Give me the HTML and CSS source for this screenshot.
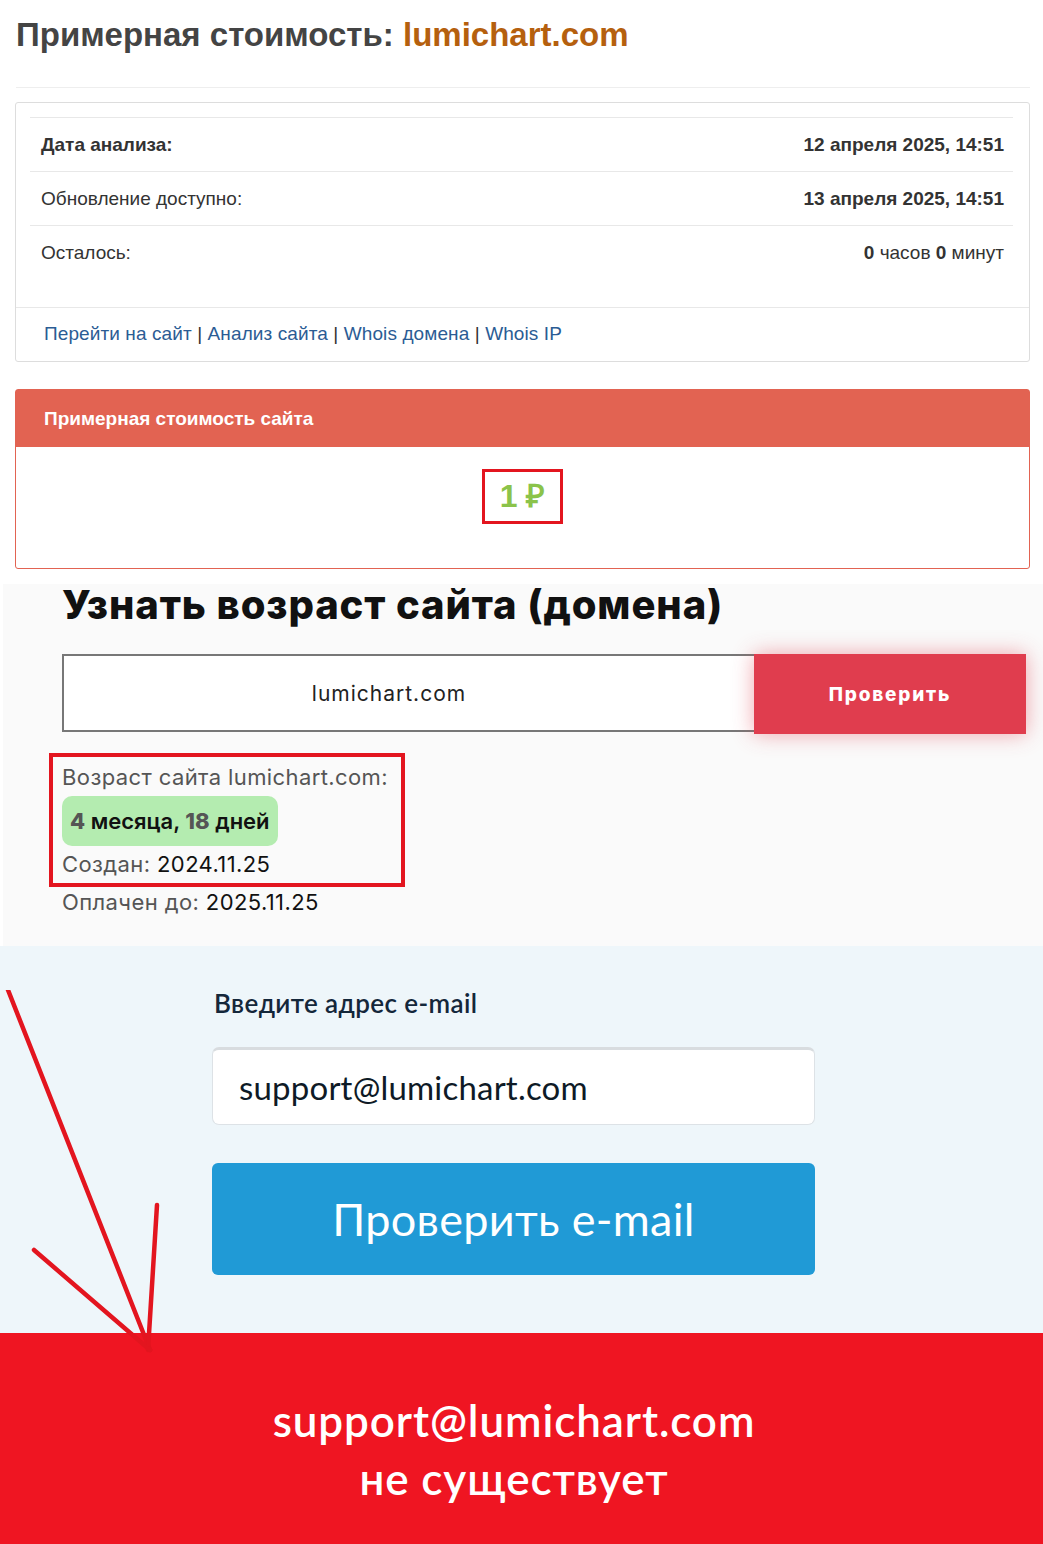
FILE: index.html
```html
<!DOCTYPE html>
<html lang="ru">
<head>
    <meta charset="UTF-8">
    <meta name="viewport" content="width=device-width, initial-scale=1.0">
    <title>lumichart.com — проверка</title>
    <link rel="stylesheet" href="styles.css">
</head>
<body>
    <div class="page">

        <!-- стоимость сайта -->
        <div class="cost">
            <h1 class="cost-title">Примерная стоимость: <span class="domain">lumichart.com</span></h1>

            <div class="info-card">
                <table class="info-table">
                    <tr>
                        <td><b>Дата анализа:</b></td>
                        <td class="right"><b>12 апреля 2025, 14:51</b></td>
                    </tr>
                    <tr>
                        <td>Обновление доступно:</td>
                        <td class="right"><b>13 апреля 2025, 14:51</b></td>
                    </tr>
                    <tr>
                        <td>Осталось:</td>
                        <td class="right"><b>0</b> часов <b>0</b> минут</td>
                    </tr>
                </table>
                <div class="info-links">
                    <a href="#">Перейти на сайт</a> | <a href="#">Анализ сайта</a> | <a href="#">Whois домена</a> | <a href="#">Whois IP</a>
                </div>
            </div>

            <div class="price-card">
                <div class="price-head">Примерная стоимость сайта</div>
                <div class="price-body">
                    <span class="price mark">1 ₽</span>
                </div>
            </div>
        </div>

        <!-- возраст домена -->
        <div class="age">
            <h2 class="age-title">Узнать возраст сайта (домена)</h2>
            <form class="age-form">
                <input class="age-input" type="text" value="lumichart.com">
                <button class="age-btn" type="button">Проверить</button>
            </form>
            <div class="age-result">
                <div class="mark mark-thick">
                    <div class="age-line">Возраст сайта lumichart.com:</div>
                    <div class="age-badge"><b>4</b> месяца, <b>18</b> дней</div>
                    <div class="age-line">Создан: <span class="val">2024.11.25</span></div>
                </div>
                <div class="age-line age-paid">Оплачен до: <span class="val">2025.11.25</span></div>
            </div>
        </div>

        <!-- проверка e-mail -->
        <div class="mail">
            <div class="mail-box">
                <label class="mail-label">Введите адрес e-mail</label>
                <input class="mail-input" type="text" value="support@lumichart.com">
                <button class="mail-btn" type="button">Проверить e-mail</button>
            </div>
        </div>

        <div class="result">
            <p>support@lumichart.com</p>
            <p>не существует</p>
        </div>

        <svg class="arrow" width="170" height="380" viewBox="0 0 170 380">
            <line x1="8" y1="0" x2="150" y2="360" />
            <line x1="157" y1="215" x2="148" y2="360" />
            <line x1="34" y1="260" x2="150" y2="360" />
        </svg>
    </div>
</body>
</html>
```

FILE: styles.css
```css
body {
    margin: 0;
    background-color: #fff;
    font-family: 'Liberation Sans', Arial, sans-serif;
    color: #333;
}
.page {
    position: relative;
    width: 1043px;
    overflow: hidden;
}

/* стоимость */
.cost {
    padding: 16px 13px 15px 15px;
}
.cost-title {
    margin: 0 0 0 1px;
    font-size: 33px;
    line-height: 38px;
    font-weight: bold;
    color: #444;
    padding-bottom: 33px;
    border-bottom: 1px solid #eee;
}
.domain {
    color: #b5600e;
}
.info-card {
    margin-top: 14px;
    border: 1px solid #ddd;
    border-radius: 3px;
}
.info-table {
    width: calc(100% - 30px);
    margin: 14px 14px 0 14px;
    border-collapse: collapse;
    font-size: 19px;
}
.info-table td {
    border-top: 1px solid #e8e8e8;
    height: 53px;
    padding: 0 9px 0 11px;
}
.info-table .right {
    text-align: right;
}
.info-links {
    margin-top: 28px;
    border-top: 1px solid #e8e8e8;
    padding: 13px 28px 14px;
    font-size: 19px;
    line-height: 26px;
    letter-spacing: 0.1px;
}
.info-links a {
    color: #2b5c94;
    text-decoration: none;
}
.price-card {
    margin-top: 27px;
    border: 1px solid #e26352;
    border-radius: 3px;
}
.price-head {
    background-color: #e26352;
    color: #fff;
    font-weight: bold;
    font-size: 19px;
    height: 57px;
    line-height: 57px;
    padding-left: 28px;
}
.price-body {
    height: 121px;
    text-align: center;
    padding-top: 22px;
    box-sizing: border-box;
}
.price {
    display: inline-block;
    font-size: 32px;
    font-weight: bold;
    color: #8bc34a;
    line-height: 49px;
    padding: 0 15px;
}
.mark {
    border: 3px solid #e3151f;
}

/* возраст */
.age {
    background-color: #fafafa;
    margin-left: 3px;
    padding: 0 17px 28px 59px;
    font-family: Inter, 'Open Sans', sans-serif;
}
.age-title {
    margin: 0;
    font-size: 40px;
    font-weight: 800;
    color: #111;
    line-height: 42px;
    letter-spacing: 0.9px;
}
.age-form {
    display: flex;
    margin-top: 28px;
}
.age-input {
    flex: 1;
    height: 78px;
    box-sizing: border-box;
    border: 2px solid #777;
    border-right: none;
    background: #fff;
    font-family: inherit;
    font-size: 21px;
    letter-spacing: 1px;
    color: #222;
    text-align: center;
    padding: 0 40px 0 0;
    margin: 0;
}
.age-btn {
    width: 272px;
    height: 80px;
    border: none;
    background-color: #e03d4e;
    color: #fff;
    font-family: inherit;
    font-size: 19px;
    font-weight: 800;
    letter-spacing: 1.8px;
    box-shadow: 0 0 20px rgba(224, 61, 78, 0.45);
    margin: 0;
}
.age-result {
    margin-top: 19px;
    margin-left: -13px;
    font-size: 22px;
    letter-spacing: 0.4px;
    color: #555;
}
.age-result .mark {
    display: inline-block;
    border-width: 4px;
    padding: 2px 13px 0 9px;
}
.age-result > .age-line {
    padding-left: 13px;
}
.age-line {
    line-height: 37px;
}
.age-paid {
    line-height: 31px;
}
.val {
    color: #111;
}
.age-badge {
    display: inline-block;
    background-color: #b4ecb0;
    border-radius: 10px;
    padding: 0 8px;
    line-height: 50px;
    color: #111;
    font-weight: 600;
    letter-spacing: 0;
}
.age-badge b {
    color: #555;
    font-weight: 800;
}

/* e-mail */
.mail {
    background-color: #eef6fa;
    padding: 39px 0 58px 212px;
    font-family: Lato, 'Open Sans', sans-serif;
}
.mail-box {
    width: 603px;
    display: flex;
    flex-direction: column;
}
.mail-label {
    font-size: 26px;
    font-weight: 600;
    color: #14273a;
    padding-left: 2px;
    line-height: 36px;
    letter-spacing: 0.4px;
}
.mail-input {
    margin-top: 26px;
    height: 78px;
    box-sizing: border-box;
    border: 1px solid #dde2e6;
    border-top: 3px solid #d8dcdf;
    border-radius: 7px;
    background: #fff;
    font-family: inherit;
    font-size: 33px;
    color: #0e1a26;
    padding: 0 26px;
    letter-spacing: 0.2px;
}
.mail-btn {
    margin-top: 38px;
    height: 112px;
    border: none;
    border-radius: 6px;
    background-color: #209ad6;
    color: #fff;
    font-family: inherit;
    font-size: 45px;
    letter-spacing: 0.3px;
}

/* результат */
.result {
    background-color: #ef1522;
    color: #fff;
    text-align: center;
    font-family: Lato, 'DejaVu Sans', sans-serif;
    font-size: 44px;
    font-weight: 600;
    letter-spacing: 0.9px;
    padding: 58px 15px 48px 0;
}
.result p {
    margin: 0;
    line-height: 58px;
}

/* стрелка поверх скриншота */
.arrow {
    position: absolute;
    left: 0;
    top: 990px;
}
.arrow line {
    stroke: #e3151f;
    stroke-width: 4.5;
    stroke-linecap: round;
}
```
